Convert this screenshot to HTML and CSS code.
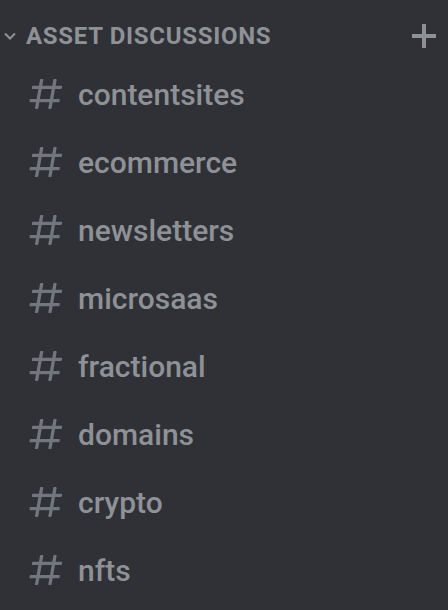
FILE: index.html
```html
<!DOCTYPE html>
<html lang="en">
<head>
  <meta charset="UTF-8">
  <title>Asset Discussions</title>
  <link rel="stylesheet" href="styles.css">
</head>
<body>

<div class="sidebar">
  <div class="category">
    <svg class="chevron" width="14" height="14" viewBox="0 0 14 14">
      <path d="M2 4.5 L7 9.5 L12 4.5" fill="none" stroke="currentColor" stroke-width="2"/>
    </svg>
    <h2 class="category-name">Asset Discussions</h2>
    <svg class="add" width="24" height="24" viewBox="0 0 24 24">
      <rect x="10" y="0" width="4" height="24" fill="currentColor"/>
      <rect x="0" y="10" width="24" height="4" fill="currentColor"/>
    </svg>
  </div>

  <ul class="channels">
    <li class="channel"><svg class="hash" viewBox="0 0 24 24"><use href="#hash"/></svg><span>contentsites</span></li>
    <li class="channel"><svg class="hash" viewBox="0 0 24 24"><use href="#hash"/></svg><span>ecommerce</span></li>
    <li class="channel"><svg class="hash" viewBox="0 0 24 24"><use href="#hash"/></svg><span>newsletters</span></li>
    <li class="channel"><svg class="hash" viewBox="0 0 24 24"><use href="#hash"/></svg><span>microsaas</span></li>
    <li class="channel"><svg class="hash" viewBox="0 0 24 24"><use href="#hash"/></svg><span>fractional</span></li>
    <li class="channel"><svg class="hash" viewBox="0 0 24 24"><use href="#hash"/></svg><span>domains</span></li>
    <li class="channel"><svg class="hash" viewBox="0 0 24 24"><use href="#hash"/></svg><span>crypto</span></li>
    <li class="channel"><svg class="hash" viewBox="0 0 24 24"><use href="#hash"/></svg><span>nfts</span></li>
  </ul>
</div>

<!-- shared channel icon -->
<svg width="0" height="0" class="defs">
  <defs>
    <path id="hash" fill="currentColor" fill-rule="evenodd" d="M5.887 21C5.575 21 5.34 20.719 5.394 20.413L6 17H2.595C2.284 17 2.049 16.72 2.103 16.414L2.278 15.414C2.319 15.175 2.527 15 2.77 15H6.35L7.41 9H4.005C3.694 9 3.459 8.72 3.513 8.414L3.688 7.414C3.729 7.175 3.937 7 4.18 7H7.76L8.397 3.413C8.439 3.174 8.647 3 8.889 3H9.873C10.185 3 10.42 3.281 10.366 3.587L9.76 7H15.76L16.397 3.413C16.439 3.174 16.647 3 16.889 3H17.873C18.185 3 18.42 3.281 18.366 3.587L17.76 7H21.165C21.476 7 21.711 7.28 21.657 7.586L21.482 8.586C21.441 8.825 21.233 9 20.99 9H17.41L16.35 15H19.755C20.066 15 20.301 15.28 20.247 15.586L20.072 16.586C20.031 16.825 19.823 17 19.58 17H16L15.363 20.587C15.321 20.826 15.113 21 14.871 21H13.887C13.575 21 13.34 20.719 13.394 20.413L14 17H8L7.363 20.587C7.321 20.826 7.113 21 6.871 21H5.887ZM9.41 9L8.35 15H14.35L15.41 9H9.41Z"/>
  </defs>
</svg>

</body>
</html>
```

FILE: styles.css
```css
body {
  margin: 0;
  background: #2f3136;
  font-family: Roboto, "Liberation Sans", sans-serif;
  color: #8e9297;
}

.sidebar {
  width: 448px;
  height: 610px;
  overflow: hidden;
}

.defs {
  position: absolute;
}

/* Category header */
.category {
  display: flex;
  align-items: center;
  height: 48px;
  padding: 12px 12px 0 3px;
}

.chevron {
  flex: none;
  margin-right: 9px;
}

.category-name {
  flex: 1;
  margin: 0;
  font-size: 24px;
  font-weight: 700;
  text-transform: uppercase;
  letter-spacing: 0.7px;
}

.add {
  flex: none;
}

/* Channel list */
.channels {
  list-style: none;
  margin: 0;
  padding: 0;
}

.channel {
  display: flex;
  align-items: center;
  height: 68px;
  padding-left: 26px;
}

.hash {
  flex: none;
  width: 40px;
  height: 40px;
  margin-right: 12px;
  color: #72767d;
}

.channel span {
  font-size: 30px;
  font-weight: 500;
}
```
